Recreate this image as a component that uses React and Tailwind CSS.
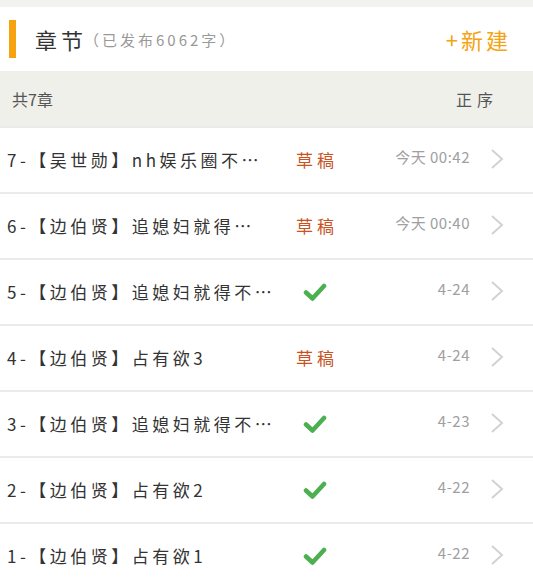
const chapters = [
  { title: '7-【吴世勋】nh娱乐圈不…', status: 'draft', date: '今天 00:42' },
  { title: '6-【边伯贤】追媳妇就得…', status: 'draft', date: '今天 00:40' },
  { title: '5-【边伯贤】追媳妇就得不…', status: 'done', date: '4-24' },
  { title: '4-【边伯贤】占有欲3', status: 'draft', date: '4-24' },
  { title: '3-【边伯贤】追媳妇就得不…', status: 'done', date: '4-23' },
  { title: '2-【边伯贤】占有欲2', status: 'done', date: '4-22' },
  { title: '1-【边伯贤】占有欲1', status: 'done', date: '4-22' },
]

const font = { fontFamily: '"Noto Sans CJK SC", "Noto Sans", sans-serif' }

function Check() {
  return (
    <svg width="24" height="20" viewBox="0 0 24 20">
      <path d="M3 10.5 L9.5 16.5 L21 4" fill="none" stroke="#4caf50" strokeWidth="4.5" strokeLinecap="round" strokeLinejoin="round" />
    </svg>
  )
}

function Chevron() {
  return (
    <svg width="14" height="22" viewBox="0 0 14 22">
      <path d="M2 2 L12 11 L2 20" fill="none" stroke="#d2d2d2" strokeWidth="2" />
    </svg>
  )
}

function ChapterRow({ chapter }) {
  return (
    <div className="flex h-[66px] items-center border-t-2 border-[#ebebeb] bg-white">
      <div className="w-[290px] whitespace-nowrap pl-[7px] text-[17px] tracking-[3.5px] text-[#333]">
        {chapter.title}
      </div>
      <div className="flex w-[50px] justify-center">
        {chapter.status === 'draft' ? (
          <span className="whitespace-nowrap pl-[4px] text-[17px] tracking-[4px] text-[#c9521f]">草稿</span>
        ) : (
          <Check />
        )}
      </div>
      <div className="mb-[6px] w-[130px] text-right text-[15px] tracking-[0.5px] text-[#a0a0a0]">
        {chapter.date}
      </div>
      <div className="mb-[2px] ml-[20px] flex">
        <Chevron />
      </div>
    </div>
  )
}

export default function App() {
  return (
    <div className="min-h-[582px] bg-[#f2f2ef] pt-[7px]" style={font}>
      <div className="flex h-[64px] items-center bg-white">
        <div className="ml-[9px] h-[38px] w-[7px] bg-[#f7a30f]" />
        <div className="ml-[19px] text-[22px] tracking-[4px] text-[#333]">章节</div>
        <div className="ml-[-3px] mt-[2px] text-[15px] tracking-[3px] text-[#999]">（已发布6062字）</div>
        <div className="ml-auto mr-[22px] text-[22px] tracking-[3px] text-[#f5a312]">+新建</div>
      </div>
      <div className="flex h-[55px] items-center justify-between bg-[#f0f0eb] pl-[12px] pr-[35px]">
        <span className="text-[16px] text-[#555]">共7章</span>
        <span className="text-[16px] tracking-[5px] text-[#555]">正序</span>
      </div>
      {chapters.map((c, i) => (
        <ChapterRow key={i} chapter={c} />
      ))}
    </div>
  )
}
